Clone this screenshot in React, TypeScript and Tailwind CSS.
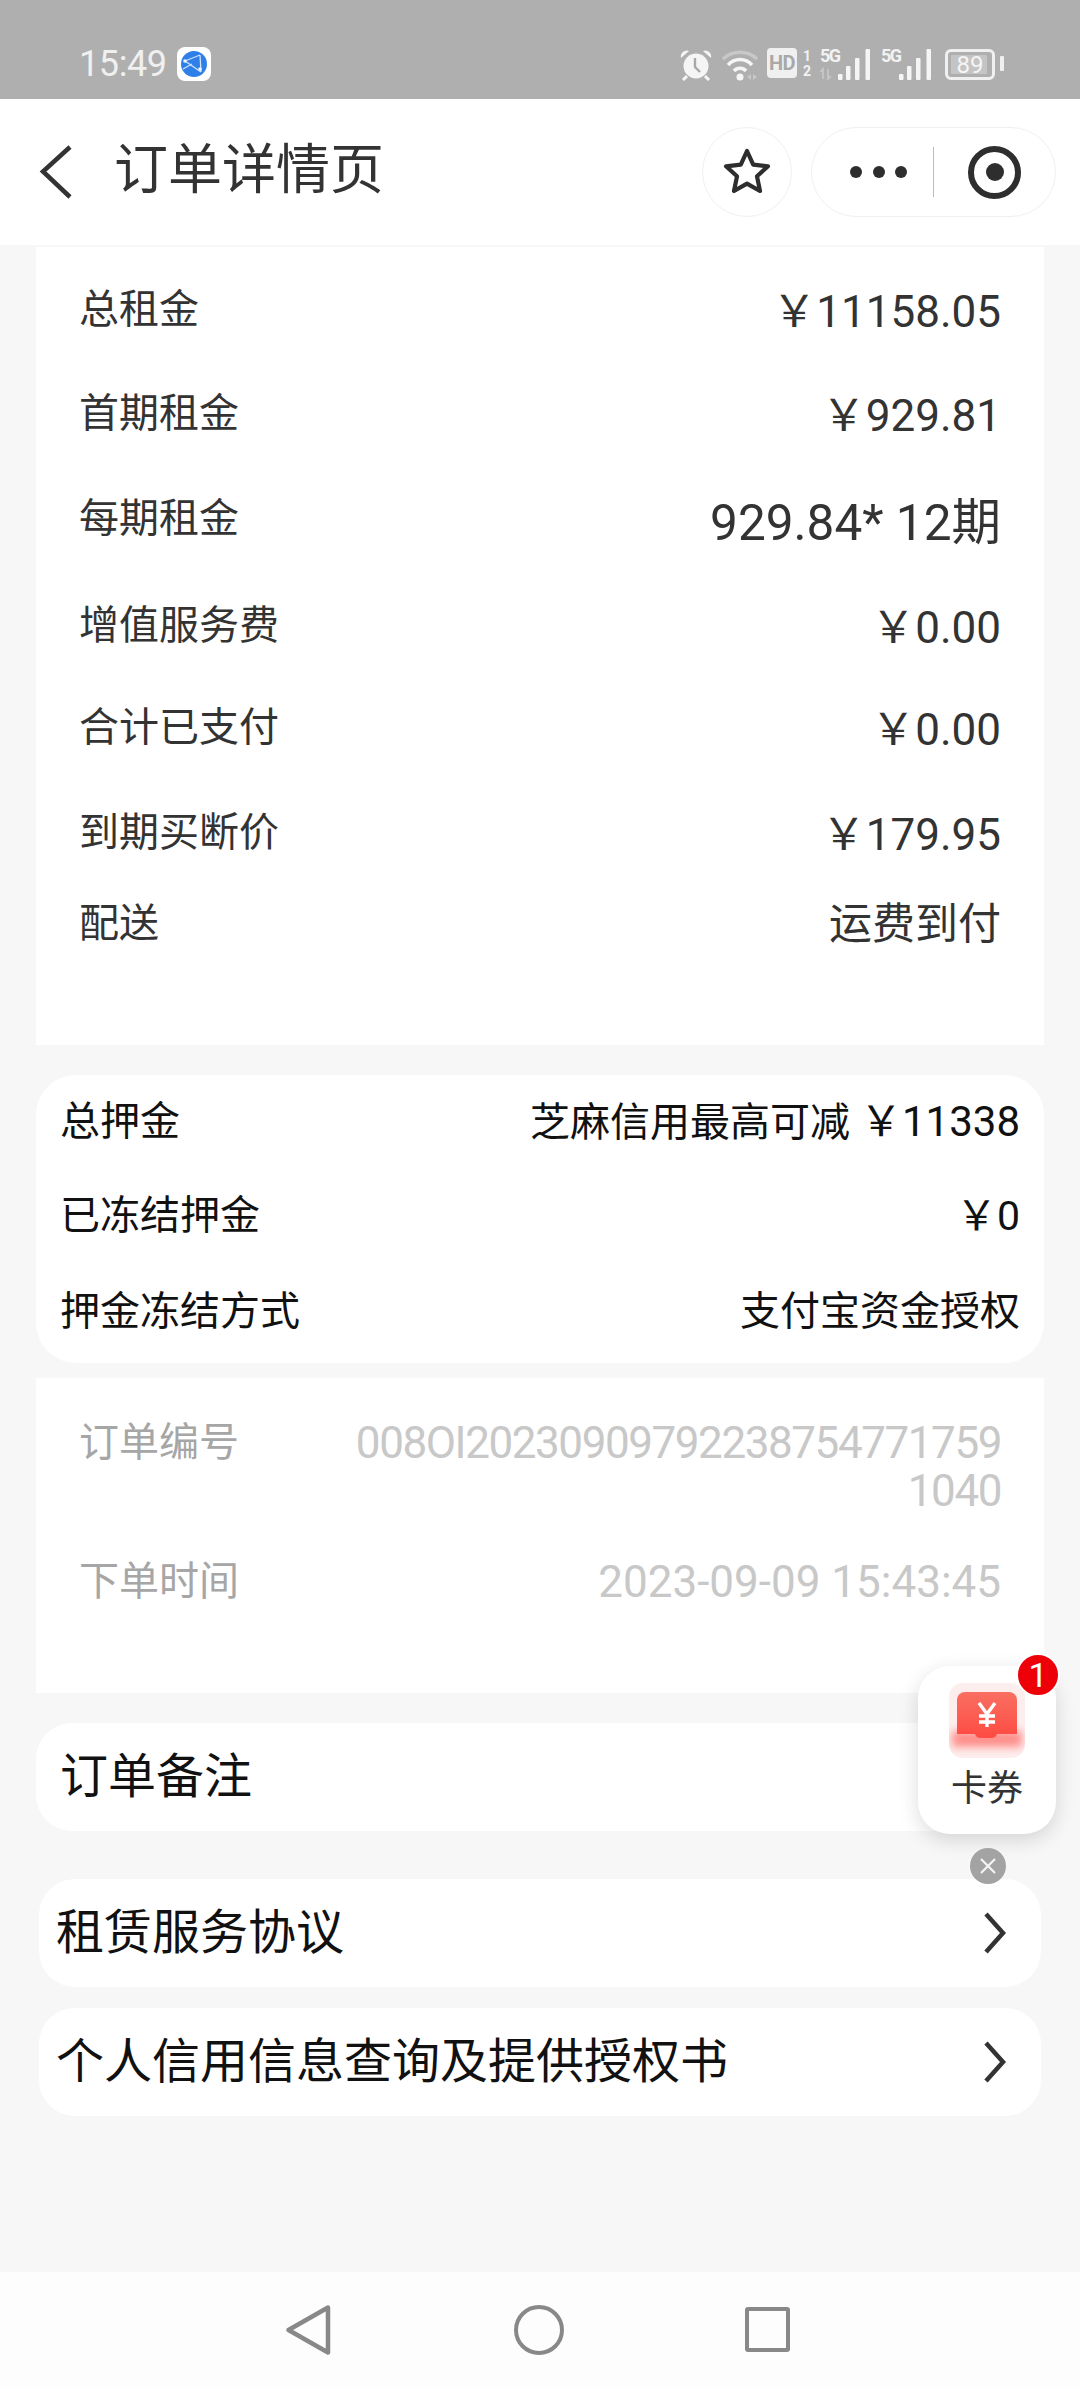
import React from "react";

const font = { fontFamily: 'Roboto, "Noto Sans CJK SC", sans-serif' };

function Signal({ arrows }: { arrows?: boolean }) {
  return (
    <div className="relative w-[50px] h-[31px] shrink-0">
      <span className="absolute left-0 top-[-3px] text-[18px] leading-[20px] font-bold tracking-[-1.5px] text-[#f2f2f2]" style={{ fontFamily: "Roboto, sans-serif" }}>5G</span>
      <svg className="absolute left-0 top-0" width="50" height="31" viewBox="0 0 50 31">
        {arrows && <path d="M3 30V20L0.5 23M8 20V30L11 27" stroke="#c9c9c9" strokeWidth="1.6" fill="none" />}
        <rect x="18" y="25" width="4.5" height="6" rx="1" fill="#f5f5f5" />
        <rect x="26" y="17" width="4.5" height="14" rx="1" fill="#f5f5f5" />
        <rect x="35" y="9" width="4.5" height="22" rx="1" fill="#f5f5f5" />
        <rect x="45.5" y="0" width="4.5" height="31" rx="1" fill="#f5f5f5" />
      </svg>
    </div>
  );
}

function StatusBar() {
  return (
    <div className="h-[99px] bg-[#afafaf] flex items-start pt-[47px] pl-[79px] shrink-0">
      <span className="text-[36px] leading-[36px] text-[#f0f0f0] w-[90px] mt-[-1px] tracking-[-0.4px]" style={{ fontFamily: "Roboto, sans-serif" }}>15:49</span>
      <div className="ml-[8px] w-[34px] h-[34px] rounded-[8px] bg-white flex items-center justify-center">
        <svg width="28" height="28" viewBox="0 0 28 28">
          <circle cx="14" cy="14" r="13" fill="#2f7fe8" />
          <path d="M5 11L20 5M5 11L21 22M20 5L21 22M12 14L3 19" stroke="#cfe3fb" strokeWidth="1.3" fill="none" />
          <circle cx="5" cy="11" r="1.8" fill="#eaf3ff" />
          <circle cx="20" cy="19" r="1.8" fill="#eaf3ff" />
        </svg>
      </div>
      <div className="ml-[469px] flex items-start">
        <svg width="32" height="32" viewBox="0 0 32 32" className="mt-[2px]">
          <circle cx="16" cy="17" r="12.5" fill="#f5f5f5" />
          <path d="M15 9v9l5 5" stroke="#a8a8a8" strokeWidth="2.4" fill="none" />
          <path d="M1 9a6 6 0 0 1 8-7zM31 9a6 6 0 0 0-8-7z" fill="#f5f5f5" />
          <path d="M7 27l-4 4M25 27l4 4" stroke="#f5f5f5" strokeWidth="3" />
        </svg>
        <svg width="38" height="33" viewBox="0 0 38 33" className="ml-[10px] mt-[2px]">
          <path d="M1 10a25 25 0 0 1 34 0" stroke="#c8c8c8" strokeWidth="3.5" fill="none" />
          <path d="M6 16a16 16 0 0 1 24 0" stroke="#f5f5f5" strokeWidth="3.5" fill="none" />
          <path d="M12 22a8 8 0 0 1 12 0" stroke="#f5f5f5" strokeWidth="3.5" fill="none" />
          <circle cx="18" cy="28" r="3.5" fill="#f5f5f5" />
          <path d="M25 28l4-3v6zM31 25l4 3-4 3z" fill="#c8c8c8" />
        </svg>
        <div className="ml-[7px] mt-[1px] w-[30px] h-[30px] rounded-[4px] bg-[#f0f0f0] flex items-center justify-center text-[20px] leading-none font-bold tracking-[-0.5px] text-[#a8a8a8]" style={{ fontFamily: "Roboto, sans-serif" }}>HD</div>
        <div className="ml-[5px] mt-[2px] w-[10px] flex flex-col items-center text-[14px] leading-[15px] font-bold text-[#f2f2f2]" style={{ fontFamily: "Roboto, sans-serif" }}>
          <span>1</span>
          <span>2</span>
        </div>
        <div className="ml-[8px] mt-[2px]"><Signal arrows /></div>
        <div className="ml-[11px] mt-[2px]"><Signal /></div>
        <div className="ml-[14px] mt-[2px] relative w-[50px] h-[31px] rounded-[6px] border-[3px] border-[#f0f0f0] flex items-center justify-center shrink-0">
          <div className="absolute left-[3px] top-[3px] bottom-[3px] w-[36px] bg-[#c4c4c4] rounded-[1px]" />
          <span className="relative text-[24px] leading-none text-[#f5f5f5]" style={{ fontFamily: "Roboto, sans-serif" }}>89</span>
        </div>
        <div className="ml-[5px] mt-[9px] w-[4px] h-[15px] rounded-[1px] bg-[#f0f0f0]" />
      </div>
    </div>
  );
}

function Header() {
  return (
    <div className="h-[146px] bg-white flex items-center shrink-0 relative">
      <svg width="36" height="56" viewBox="0 0 36 56" className="ml-[38px]">
        <path d="M32 3L5 27.5L32 53" stroke="#333" strokeWidth="4.5" fill="none" />
      </svg>
      <span className="ml-[40px] text-[54px] leading-none text-[#333] mt-[-2px]">订单详情页</span>
      <div className="ml-auto flex items-center mr-[24px]">
        <div className="w-[90px] h-[90px] rounded-full border border-[#f0f0f0] flex items-center justify-center">
          <svg width="50" height="50" viewBox="0 0 50 50">
            <path d="M25 4l6.2 13.6 14.8 1.7-11 10 3 14.7-13-7.4-13 7.4 3-14.7-11-10 14.8-1.7z" stroke="#2e2e2e" strokeWidth="4.2" strokeLinejoin="round" fill="none" />
          </svg>
        </div>
        <div className="ml-[19px] w-[245px] h-[90px] rounded-full border border-[#f0f0f0] flex items-center pl-[38px]">
          <div className="flex gap-[10.5px]">
            <span className="w-[12px] h-[12px] rounded-full bg-[#2e2e2e]" />
            <span className="w-[12px] h-[12px] rounded-full bg-[#2e2e2e]" />
            <span className="w-[12px] h-[12px] rounded-full bg-[#2e2e2e]" />
          </div>
          <div className="ml-[26px] w-px h-[50px] bg-[#bdbdbd]" />
          <div className="ml-[34px] w-[53px] h-[53px] rounded-full border-[6px] border-[#2e2e2e] flex items-center justify-center">
            <span className="w-[18px] h-[18px] rounded-full bg-[#2e2e2e]" />
          </div>
        </div>
      </div>
    </div>
  );
}

function Row({ h, label, value, valueClass = "" }: { h: string; label: string; value: string; valueClass?: string }) {
  return (
    <div className={`${h} flex items-center justify-between`}>
      <span className="text-[40px] leading-none text-[#333] mt-[2px]">{label}</span>
      <span className={valueClass || "text-[44px] leading-none text-[#333] mt-[6px]"}>{value}</span>
    </div>
  );
}

function DepositRow({ h, label, children }: { h: string; label: string; children: React.ReactNode }) {
  return (
    <div className={`${h} flex items-center justify-between`}>
      <span className="text-[40px] leading-none text-[#111]">{label}</span>
      <span className="text-[40px] leading-none text-[#111]">{children}</span>
    </div>
  );
}

function LinkCard({ label, className }: { label: string; className: string }) {
  return (
    <div className={`mx-[39px] h-[108px] bg-white rounded-[36px] flex items-center justify-between pl-[17px] pr-[34px] ${className}`}>
      <span className="text-[48px] leading-none text-[#111]">{label}</span>
      <svg width="24" height="42" viewBox="0 0 24 42">
        <path d="M3 2l17 19L3 40" stroke="#333" strokeWidth="4.5" fill="none" />
      </svg>
    </div>
  );
}

function Coupon() {
  return (
    <>
      <div className="absolute left-[918px] top-[1666px] w-[138px] h-[168px] rounded-[32px] bg-white shadow-[0_6px_20px_rgba(0,0,0,0.14)] flex flex-col items-center">
        <div className="relative mt-[17px] w-[76px] h-[75px] rounded-[14px] bg-[#fdeeee] overflow-hidden">
          <div className="absolute left-[3px] top-[48px] w-[70px] h-[16px] bg-[#fe8d88] blur-[4px]" />
          <div className="absolute left-[8px] top-[9px] w-[60px] h-[42px] rounded-t-[8px] bg-gradient-to-b from-[#f96f61] to-[#fe4d45]" />
          <div className="absolute left-[26px] top-[50px] w-[22px] h-[5px] rounded-b-[10px] bg-[#fe4d45]" />
          <svg className="absolute left-[28px] top-[19px]" width="20" height="26" viewBox="0 0 20 26">
            <path d="M2 1l8 11 8-11M10 12v13M2 14h16M2 20h16" stroke="#fff" strokeWidth="3.4" fill="none" />
          </svg>
        </div>
        <span className="mt-[11px] text-[36px] leading-[40px] text-[#333]">卡券</span>
      </div>
      <div className="absolute left-[1016px] top-[1653px] w-[44px] h-[44px] rounded-full bg-[#ee0009] border-2 border-white flex items-center justify-center text-white text-[34px] leading-none" style={{ fontFamily: "Roboto, sans-serif" }}>1</div>
      <div className="absolute left-[970px] top-[1848px] w-[36px] h-[36px] rounded-full bg-[#a3a3a3] flex items-center justify-center">
        <svg width="20" height="20" viewBox="0 0 20 20"><path d="M3 3l14 14M17 3L3 17" stroke="#f4f4f4" strokeWidth="2.2" /></svg>
      </div>
    </>
  );
}

function NavBar() {
  return (
    <div className="h-[116px] bg-[#fdfdfd] flex items-start pt-[32px] pl-[285px] shrink-0">
      <svg width="48" height="52" viewBox="0 0 48 52">
        <path d="M3.5 26L43 3.5V48.5z" stroke="#888" strokeWidth="4.5" strokeLinejoin="round" fill="none" />
      </svg>
      <div className="ml-[181px] mt-[1px] w-[50px] h-[50px] rounded-full border-[4.5px] border-[#888]" />
      <div className="ml-[181px] mt-[3px] w-[45px] h-[45px] rounded-[3px] border-[4.5px] border-[#888]" />
    </div>
  );
}

export default function App() {
  return (
    <div className="relative w-[1080px] h-[2388px] bg-[#f7f7f7] flex flex-col overflow-hidden" style={font}>
      <StatusBar />
      <Header />

      <div className="mt-[2px] mx-[36px] h-[798px] bg-white px-[43px] pt-[10px]">
        <Row h="h-[104px]" label="总租金" value="￥11158.05" />
        <Row h="h-[103px]" label="首期租金" value="￥929.81" />
        <Row h="h-[107px]" label="每期租金" value="929.84* 12期" valueClass="text-[49.5px] leading-none text-[#333] mt-[12px]" />
        <Row h="h-[108px]" label="增值服务费" value="￥0.00" />
        <Row h="h-[96px]" label="合计已支付" value="￥0.00" />
        <Row h="h-[114px]" label="到期买断价" value="￥179.95" />
        <Row h="h-[68px]" label="配送" value="运费到付" valueClass="text-[43px] leading-none text-[#333] mt-[2px]" />
      </div>

      <div className="mt-[30px] mx-[36px] h-[288px] bg-white rounded-[40px] px-[24px] pt-[5px]">
        <DepositRow h="h-[84px]" label="总押金">
          芝麻信用最高可减 <span className="text-[42px]">￥11338</span>
        </DepositRow>
        <DepositRow h="h-[104px]" label="已冻结押金">
          <span className="text-[41px]">￥0</span>
        </DepositRow>
        <DepositRow h="h-[88px]" label="押金冻结方式">支付宝资金授权</DepositRow>
      </div>

      <div className="mt-[15px] mx-[36px] h-[315px] bg-white px-[43px] pt-[41px]">
        <div className="flex justify-between items-start">
          <span className="text-[40px] leading-[44px] text-[#a6a6a6] mt-[2px]">订单编号</span>
          <span className="text-right whitespace-nowrap text-[44px] leading-[48px] tracking-[-1.43px] text-[#c8c8c8]">
            008OI20230909792238754771759
            <br />
            1040
          </span>
        </div>
        <div className="mt-[45px] flex justify-between items-center">
          <span className="text-[40px] leading-[44px] text-[#a6a6a6]">下单时间</span>
          <span className="text-[44px] leading-[44px] text-[#c8c8c8]">2023-09-09 15:43:45</span>
        </div>
      </div>

      <div className="mt-[30px] mx-[36px] h-[108px] bg-white rounded-[36px] flex items-center pl-[24px]">
        <span className="text-[48px] leading-none text-[#111]">订单备注</span>
      </div>

      <LinkCard label="租赁服务协议" className="mt-[48px]" />
      <LinkCard label="个人信用信息查询及提供授权书" className="mt-[21px]" />

      <div className="flex-1" />
      <NavBar />
      <Coupon />
    </div>
  );
}
